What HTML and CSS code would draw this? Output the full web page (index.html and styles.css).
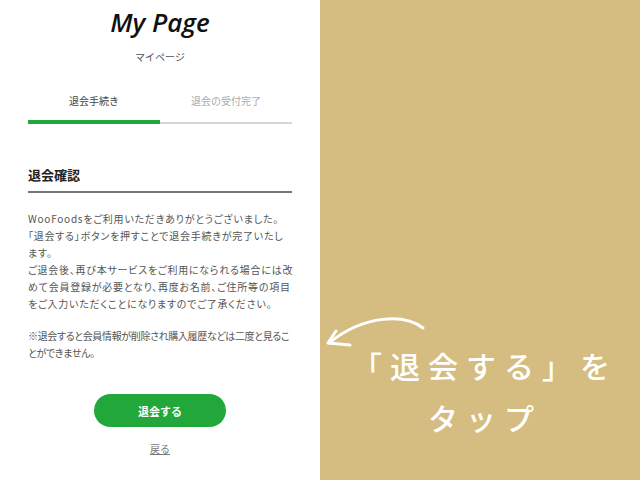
FILE: index.html
```html
<!DOCTYPE html>
<html lang="ja">
<head>
<meta charset="utf-8">
<link rel="stylesheet" href="styles.css">
</head>
<body>
<div class="page">
  <main class="panel">
    <h1 class="title">My Page</h1>
    <p class="subtitle">マイページ</p>
    <div class="tabs">
      <div class="tab tab-active">退会手続き</div>
      <div class="tab tab-idle">退会の受付完了</div>
    </div>
    <h2 class="heading">退会確認</h2>
    <p class="body"><span class="ln">WooFoodsをご利用いただきありがとうございました。</span><span class="ln">「退会する」ボタンを押すことで退会手続きが完了いたし</span><span class="ln">ます。</span><span class="ln">ご退会後、再び本サービスをご利用になられる場合には改</span><span class="ln">めて会員登録が必要となり、再度お名前、ご住所等の項目</span><span class="ln">をご入力いただくことになりますのでご了承ください。</span></p>
    <p class="body note"><span class="ln">※退会すると会員情報が削除され購入履歴などは二度と見るこ</span><span class="ln">とができません。</span></p>
    <div class="actions">
      <button class="btn">退会する</button>
      <a class="back" href="#">戻る</a>
    </div>
  </main>
  <aside class="side">
    <svg class="arrow" width="110" height="36" viewBox="0 0 110 36">
      <path d="M103 16 C 85 2, 45 2, 9 31" fill="none" stroke="#fff" stroke-width="3" stroke-linecap="round"/>
      <path d="M16 19 L8 31 L30 33" fill="none" stroke="#fff" stroke-width="3" stroke-linecap="round" stroke-linejoin="round"/>
    </svg>
    <p class="callout">「退会する」を<br>タップ</p>
  </aside>
</div>
</body>
</html>
```

FILE: styles.css
```css
* { box-sizing: border-box; }
html, body { margin: 0; padding: 0; }
body {
  width: 640px;
  height: 480px;
  overflow: hidden;
  font-family: "Noto Sans CJK JP", "Noto Sans", sans-serif;
}
.page {
  display: flex;
  width: 640px;
  height: 480px;
}
.panel {
  width: 320px;
  background: #fff;
  padding: 0 28px;
}
.title {
  margin: 5px 0 0;
  font-family: "Open Sans", sans-serif;
  font-style: italic;
  font-weight: 600;
  font-size: 26px;
  line-height: 34px;
  text-align: center;
  color: #111;
}
.subtitle {
  margin: 10px 0 0;
  font-size: 10px;
  line-height: 16px;
  text-align: center;
  color: #555;
}
.tabs {
  display: flex;
  margin-top: 28px;
}
.tab {
  flex: 1;
  text-align: center;
  font-size: 10px;
  line-height: 16px;
}
.tab-active {
  color: #444;
  padding-bottom: 11px;
  border-bottom: 4px solid #22a83a;
}
.tab-idle {
  color: #aaa;
  padding-bottom: 13px;
  border-bottom: 2px solid #d6d6d6;
}
.heading {
  margin: 42px 0 0;
  font-size: 13px;
  line-height: 18px;
  font-weight: 700;
  color: #222;
  padding-bottom: 7px;
  border-bottom: 2px solid #777;
}
.body {
  margin: 17px 0 0;
  font-size: 10px;
  line-height: 17px;
  color: #555;
  font-feature-settings: "palt";
  letter-spacing: 0.75px;
}
.ln {
  display: block;
  white-space: nowrap;
}
.note {
  margin-top: 15px;
  letter-spacing: -0.35px;
}
.actions {
  display: flex;
  flex-direction: column;
  align-items: center;
  margin-top: 33px;
}
.btn {
  width: 132px;
  height: 33px;
  border: none;
  border-radius: 17px;
  background: #22a83a;
  color: #fff;
  font-family: "Noto Sans CJK JP", sans-serif;
  font-weight: 700;
  font-size: 11px;
  padding: 0;
}
.back {
  margin-top: 14px;
  font-size: 10px;
  line-height: 16px;
  color: #777;
  text-decoration: underline;
}
.side {
  flex: 1;
  background: #d5bd81;
  padding-top: 312px;
}
.arrow {
  display: block;
}
.callout {
  margin: -9px 0 0;
  text-align: center;
  color: #fff;
  font-size: 30px;
  line-height: 52px;
  font-weight: 500;
  letter-spacing: 8px;
  padding-left: 10px;
}
```
